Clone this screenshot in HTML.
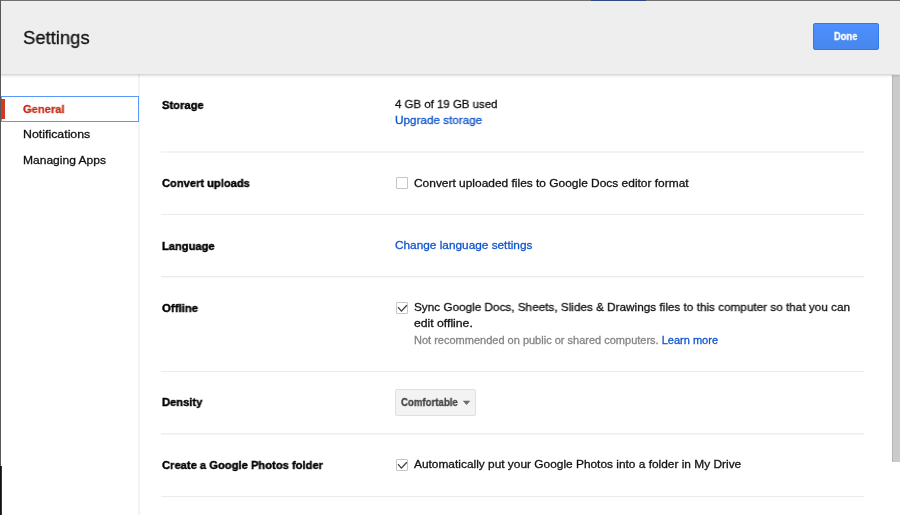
<!DOCTYPE html>
<html>
<head>
<meta charset="utf-8">
<title>Settings</title>
<style>
html,body{margin:0;padding:0;}
body{width:900px;height:515px;overflow:hidden;background:#fff;position:relative;
  font-family:"Liberation Sans",sans-serif;font-size:11.8px;color:#111;}
.abs{position:absolute;white-space:nowrap;z-index:4;}
.abs span.s{display:inline-block;transform-origin:0 0;white-space:nowrap;will-change:transform;-webkit-text-stroke:0.3px currentColor;}
#header{position:absolute;left:0;top:0;width:900px;height:74px;background:#eeeeee;
  box-shadow:0 1px 3px rgba(0,0,0,.24);z-index:5;}
#topline{position:absolute;left:0;top:0;width:900px;height:1px;background:#707070;z-index:8;}
#topblue{position:absolute;left:591px;top:0;width:55px;height:1px;background:#2c4a85;z-index:9;}
#leftline{position:absolute;left:0;top:0;width:1px;height:515px;background:#585858;z-index:9;}
#leftblk{position:absolute;left:0;top:466px;width:2px;height:49px;background:linear-gradient(90deg,#111 60%,#777);z-index:9;}
#done{position:absolute;left:813px;top:22.5px;width:64px;height:25px;border:1px solid #3079ed;
  background:linear-gradient(#4d90fe,#4787ed);z-index:6;border-radius:2px;}
#side{position:absolute;left:0;top:74px;width:138px;height:441px;background:#fff;border-right:2px solid #f3f3f3;}
#gen{position:absolute;left:1px;top:96.2px;width:136px;height:24px;border:1px solid #5b98fb;z-index:2;}
#genbar{position:absolute;left:1px;top:99px;width:3.6px;height:20px;background:#d03a24;z-index:3;}
.nav{line-height:16px;z-index:3;}
.lbl{font-weight:bold;line-height:16px;font-size:11.6px;color:#000;}
.lbl span.s,.b span.s{-webkit-text-stroke:0.4px currentColor;}
.val{line-height:16px;}
.cbt{line-height:16px;}
a{color:#15c;text-decoration:none;}
.sep{position:absolute;left:161px;width:703px;height:1px;background:#ebebeb;}
.cb{position:absolute;left:396px;width:10px;height:10px;border:1px solid #c6c6c6;background:#fff;border-radius:1px;}
.cb svg{position:absolute;left:0;top:0;}
#dd{z-index:0;position:absolute;left:395px;top:389.3px;width:79px;height:25px;border:1px solid #dfdfdf;background:#f3f3f3;border-radius:2px;}
#arrow{position:absolute;left:460px;top:398px;width:14px;height:10px;z-index:4;}
#sb{position:absolute;left:892px;top:75px;width:8px;height:386.5px;background:#cbcbcb;border-left:1px solid #b5b5b5;box-sizing:border-box;}
.gray{color:#858585;}
</style>
</head>
<body>
<div id="header"></div>
<div id="topline"></div><div id="topblue"></div><div id="leftline"></div><div id="leftblk"></div>
<div id="done"></div>
<div id="side"></div>
<div id="gen"></div><div id="genbar"></div>
<div id="title" class="abs " style="left:23px;top:25.66px;font-size:19px;line-height:24px;z-index:6;"><span class="s" style="transform:scaleX(0.9701)">Settings</span></div>
<div id="t_gen" class="abs nav" style="left:23px;top:100.85px;color:#c92d17;font-weight:bold;font-size:11.6px;"><span class="s" style="transform:scaleX(0.9609)">General</span></div>
<div id="t_not" class="abs nav" style="left:23px;top:126.1px;"><span class="s" style="transform:scaleX(1.0472)">Notifications</span></div>
<div id="t_man" class="abs nav" style="left:23px;top:151.85px;"><span class="s" style="transform:scaleX(1.0206)">Managing Apps</span></div>
<div id="l1" class="abs lbl" style="left:162px;top:96.95px;"><span class="s" style="transform:scaleX(0.9636)">Storage</span></div>
<div id="v1a" class="abs val" style="left:395px;top:96.45px;"><span class="s" style="transform:scaleX(0.9707)">4 GB of 19 GB used</span></div>
<div id="v1b" class="abs val" style="left:395px;top:112.45px;"><span class="s" style="transform:scaleX(0.9921)"><a>Upgrade storage</a></span></div>
<div id="l2" class="abs lbl" style="left:162px;top:175.25px;"><span class="s" style="transform:scaleX(0.9597)">Convert uploads</span></div>
<div id="v2" class="abs cbt" style="left:414px;top:174.8px;"><span class="s" style="transform:scaleX(1.0115)">Convert uploaded files to Google Docs editor format</span></div>
<div id="l3" class="abs lbl" style="left:162px;top:237.75px;"><span class="s" style="transform:scaleX(0.9605)">Language</span></div>
<div id="v3" class="abs val" style="left:395px;top:236.55px;"><span class="s" style="transform:scaleX(1.0022)"><a>Change language settings</a></span></div>
<div id="l4" class="abs lbl" style="left:162px;top:299.85px;"><span class="s" style="transform:scaleX(0.9804)">Offline</span></div>
<div id="v4a" class="abs cbt" style="left:414px;top:299.25px;"><span class="s" style="transform:scaleX(0.9954)">Sync Google Docs, Sheets, Slides &amp; Drawings files to this computer so that you can</span></div>
<div id="v4b" class="abs cbt" style="left:414px;top:315.35px;"><span class="s" style="transform:scaleX(1.0344)">edit offline.</span></div>
<div id="v4c" class="abs cbt gray" style="left:414px;top:332.0px;font-size:11px;"><span class="s" style="transform:scaleX(1.0004)">Not recommended on public or shared computers. <a>Learn more</a></span></div>
<div id="l5" class="abs lbl" style="left:162px;top:394.45px;"><span class="s" style="transform:scaleX(0.962)">Density</span></div>
<div id="ddt" class="abs " style="left:401px;top:395.4px;font-size:10.5px;font-weight:bold;color:#444;line-height:14px;"><span class="s" style="transform:scaleX(0.9184)">Comfortable</span></div>
<div id="l6" class="abs lbl" style="left:162px;top:457.05px;"><span class="s" style="transform:scaleX(0.9649)">Create a Google Photos folder</span></div>
<div id="v6" class="abs cbt" style="left:414px;top:456.15px;"><span class="s" style="transform:scaleX(1.0081)">Automatically put your Google Photos into a folder in My Drive</span></div>
<div id="donet" class="abs " style="left:834px;top:28.96px;color:#fff;font-weight:bold;font-size:10.5px;line-height:14px;z-index:7;"><span class="s" style="transform:scaleX(0.8876)">Done</span></div>
<div class="sep" style="top:151px;height:2px;background:#f3f3f3;"></div>
<div class="sep" style="top:214px;"></div>
<div class="sep" style="top:276px;height:2px;background:linear-gradient(#ebebeb 50%,#f8f8f8 50%);"></div>
<div class="sep" style="top:371px;"></div>
<div class="sep" style="top:433px;height:2px;background:linear-gradient(#efefef 50%,#f4f4f4 50%);"></div>
<div class="sep" style="top:496px;"></div>
<div class="cb" style="top:177px;"></div>
<div class="cb" style="top:302px;"><svg width="11" height="11" viewBox="0 0 11 11" style="overflow:visible"><path d="M1.0 4.2 L4.4 8.1 L9.8 2.3" fill="none" stroke="#3c3c3c" stroke-width="1.25"/></svg></div>
<div class="cb" style="top:459px;"><svg width="11" height="11" viewBox="0 0 11 11" style="overflow:visible"><path d="M1.0 4.2 L4.4 8.1 L9.8 2.3" fill="none" stroke="#3c3c3c" stroke-width="1.25"/></svg></div>
<div id="dd"></div><svg id="arrow" viewBox="0 0 14 10"><polygon points="2.8,2.8 10.3,2.8 6.55,7.1" fill="#6a6a6a"/></svg>
<div id="sb"></div>
</body>
</html>
